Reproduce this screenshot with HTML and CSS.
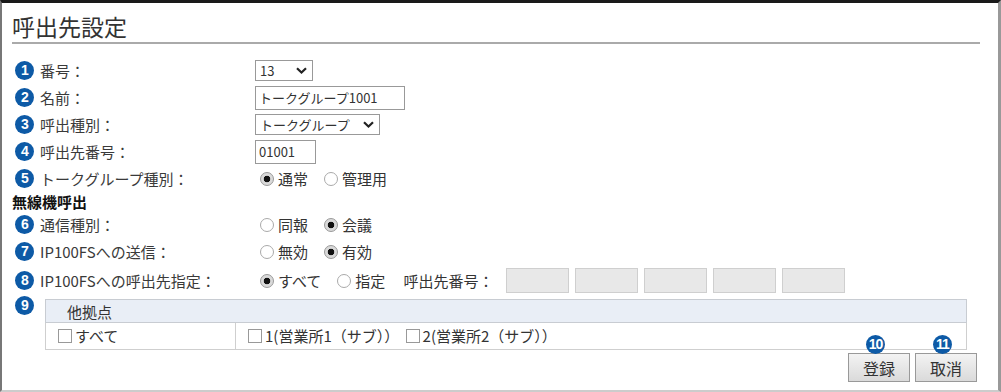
FILE: index.html
```html
<!DOCTYPE html>
<html lang="ja">
<head>
    <meta charset="UTF-8">
    <title>呼出先設定</title>
    <link rel="stylesheet" href="styles.css">
</head>
<body>

<div class="frame">
    <h1 class="title">呼出先設定</h1>

    <div class="form">
        <div class="row">
            <span class="label"><span class="num">1</span>番号：</span>
            <span class="select sel-no">13
                <svg class="chev" width="11" height="7" viewBox="0 0 11 7"><path d="M1 1.2 L5.5 5.5 L10 1.2" fill="none" stroke="#222" stroke-width="2.2"/></svg>
            </span>
        </div>
        <div class="row">
            <span class="label"><span class="num">2</span>名前：</span>
            <input class="text name" type="text" value="トークグループ1001">
        </div>
        <div class="row">
            <span class="label"><span class="num">3</span>呼出種別：</span>
            <span class="select sel-kind">トークグループ
                <svg class="chev" width="11" height="7" viewBox="0 0 11 7"><path d="M1 1.2 L5.5 5.5 L10 1.2" fill="none" stroke="#222" stroke-width="2.2"/></svg>
            </span>
        </div>
        <div class="row">
            <span class="label"><span class="num">4</span>呼出先番号：</span>
            <input class="text dest" type="text" value="01001">
        </div>
        <div class="row">
            <span class="label"><span class="num">5</span>トークグループ種別：</span>
            <label class="opt"><input type="radio" name="tg" checked>通常</label>
            <label class="opt"><input type="radio" name="tg">管理用</label>
        </div>

        <div class="heading">無線機呼出</div>

        <div class="row">
            <span class="label"><span class="num">6</span>通信種別：</span>
            <label class="opt"><input type="radio" name="mode">同報</label>
            <label class="opt"><input type="radio" name="mode" checked>会議</label>
        </div>
        <div class="row">
            <span class="label"><span class="num">7</span>IP100FSへの送信：</span>
            <label class="opt"><input type="radio" name="send">無効</label>
            <label class="opt"><input type="radio" name="send" checked>有効</label>
        </div>
        <div class="row row-dest">
            <span class="label"><span class="num">8</span>IP100FSへの呼出先指定：</span>
            <label class="opt"><input type="radio" name="target" checked>すべて</label>
            <label class="opt"><input type="radio" name="target">指定</label>
            <span class="dest-label">呼出先番号：</span>
            <span class="boxes">
                <input class="box" type="text" disabled>
                <input class="box" type="text" disabled>
                <input class="box" type="text" disabled>
                <input class="box" type="text" disabled>
                <input class="box" type="text" disabled>
            </span>
        </div>

        <div class="row-other">
            <span class="num">9</span>
            <table class="sites">
                <tr><th colspan="2">他拠点</th></tr>
                <tr>
                    <td class="all"><label class="chk"><input type="checkbox">すべて</label></td>
                    <td>
                        <label class="chk"><input type="checkbox">1(営業所1（サブ））</label>
                        <label class="chk"><input type="checkbox">2(営業所2（サブ））</label>
                    </td>
                </tr>
            </table>
        </div>
    </div>

    <div class="actions">
        <button class="btn"><span class="num badge">10</span>登録</button>
        <button class="btn"><span class="num badge">11</span>取消</button>
    </div>
</div>

</body>
</html>
```

FILE: styles.css
```css
body {
    margin: 0;
    font-family: "Noto Sans CJK JP", "Noto Sans", sans-serif;
    color: #333;
    background-color: #fff;
}
.frame {
    width: 1001px;
    height: 392px;
    box-sizing: border-box;
    border-top: 3px solid #1a1a1a;
    border-left: 2px solid #777;
    border-right: 3px solid #999;
    border-bottom: 2px solid #ccc;
}
.title {
    margin: 8px 18px 0 10px;
    font-size: 23px;
    font-weight: normal;
    line-height: 31px;
    border-bottom: 2px solid #aaa;
    color: #333;
}
.form {
    margin-top: 13px;
}
.row {
    display: flex;
    align-items: center;
    height: 27px;
}
.label {
    width: 253px;
    box-sizing: border-box;
    padding-left: 13px;
    display: flex;
    align-items: center;
    gap: 6px;
    font-size: 15px;
    white-space: nowrap;
    color: #3a3a3a;
}
.num {
    flex: none;
    width: 19px;
    height: 19px;
    border-radius: 50%;
    background-color: #0d5aa6;
    color: #fff;
    font: bold 14px/19px "Liberation Sans", Arial, sans-serif;
    text-align: center;
    letter-spacing: -1px;
}
.select {
    display: inline-flex;
    align-items: center;
    justify-content: space-between;
    height: 21px;
    box-sizing: border-box;
    border: 1px solid #999;
    padding: 0 5px 0 4px;
    font-size: 13px;
    background-color: #fff;
}
.sel-no {
    width: 58px;
}
.sel-kind {
    width: 125px;
}
.text {
    height: 24px;
    box-sizing: border-box;
    border: 1px solid #999;
    padding: 0 3px;
    font: 13px "Noto Sans CJK JP", sans-serif;
    color: #333;
    margin: 0;
}
.name {
    width: 150px;
}
.dest {
    width: 61px;
}
.heading {
    height: 19px;
    line-height: 19px;
    padding-left: 10px;
    font-size: 15px;
    font-weight: bold;
    color: #111;
}
.opt {
    display: inline-flex;
    align-items: center;
    font-size: 15px;
    margin-right: 11px;
}
.opt input {
    appearance: none;
    width: 14px;
    height: 14px;
    margin: 0 4px 0 5px;
    border: 1px solid #aaa;
    border-radius: 50%;
    background-color: #fff;
}
.opt input:checked {
    background: radial-gradient(circle, #111 0 3px, #d9d9d9 3.6px);
    border-color: #999;
}
.row-dest {
    height: 31px;
}
.row-dest .opt + .opt {
    margin-right: 0;
}
.dest-label {
    font-size: 15px;
    margin-left: 18px;
}
.boxes {
    display: flex;
    gap: 6px;
    margin-left: 13px;
}
.box {
    width: 63px;
    height: 25px;
    box-sizing: border-box;
    margin: 0;
    border: 1px solid #cfcfcf;
    background-color: #e8e8e8;
}
.row-other {
    display: flex;
    align-items: flex-start;
    padding-left: 13px;
    margin-top: 3px;
}
.row-other .num {
    margin-top: -3px;
}
.sites {
    margin-left: 11px;
    width: 922px;
    border-collapse: collapse;
}
.sites th {
    height: 22px;
    padding: 0 0 0 21px;
    text-align: left;
    font-size: 15px;
    font-weight: normal;
    background-color: #e9eef6;
    border: 1px solid #c8ccd2;
}
.sites td {
    height: 26px;
    padding: 0 0 0 12px;
    border: 1px solid #cfcfcf;
    font-size: 15px;
}
.sites td.all {
    width: 177px;
}
.chk {
    display: inline-flex;
    align-items: center;
    margin-right: 3px;
}
.chk input {
    appearance: none;
    width: 14px;
    height: 14px;
    margin: 0 3px 0 0;
    border: 1px solid #999;
    background-color: #fff;
}
.actions {
    display: flex;
    justify-content: flex-end;
    gap: 5px;
    padding-right: 21px;
    margin-top: 3px;
}
.btn {
    position: relative;
    width: 62px;
    height: 29px;
    padding: 0;
    border: 1px solid #999;
    background: linear-gradient(#f3f3f3, #dadada);
    font: 16px "Noto Sans CJK JP", sans-serif;
    color: #333;
}
.badge {
    position: absolute;
    top: -19px;
    left: 50%;
    margin-left: -13px;
}
```
